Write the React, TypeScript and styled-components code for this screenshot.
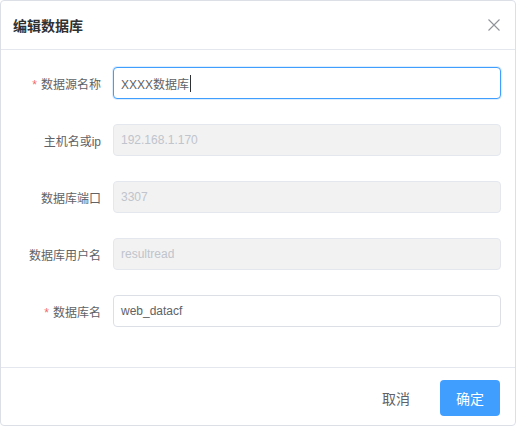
import React from "react";
import styled, { createGlobalStyle } from "styled-components";

const GlobalStyle = createGlobalStyle`
  html, body { margin: 0; padding: 0; background: #ffffff; }
  body { font-family: "Liberation Sans", "Noto Sans CJK SC", sans-serif; }
  * { box-sizing: border-box; }
`;

const Dialog = styled.div`
  width: 516px;
  height: 426px;
  border: 1px solid #dcdfe6;
  border-radius: 4px;
  background: #fff;
  display: flex;
  flex-direction: column;
  overflow: hidden;
`;

const Header = styled.div`
  height: 49px;
  flex: none;
  display: flex;
  align-items: center;
  justify-content: space-between;
  padding: 0 14px 1px 12px;
  border-bottom: 1px solid #e4e7ed;
`;

const Title = styled.div`
  font-size: 14px;
  font-weight: bold;
  color: #303133;
  letter-spacing: 0;
`;

const Close = styled.button`
  border: 0;
  background: transparent;
  padding: 0;
  width: 14px;
  height: 14px;
  display: flex;
  align-items: center;
  justify-content: center;
  cursor: pointer;
`;

const Body = styled.div`
  flex: none;
  padding: 17px 14px 40px 0;
  display: flex;
  flex-direction: column;
  gap: 25px;
`;

const Row = styled.div`
  display: flex;
  align-items: center;
  height: 32px;
`;

const Label = styled.label<{ $required?: boolean }>`
  width: 112px;
  flex: none;
  padding-right: 12px;
  text-align: right;
  font-size: 12px;
  color: #606266;
  white-space: nowrap;
  &::before {
    content: ${(p) => (p.$required ? "'*'" : "none")};
    color: #f56c6c;
    margin-right: 4px;
  }
`;

const Field = styled.div<{ $disabled?: boolean; $focused?: boolean }>`
  flex: 1;
  height: 32px;
  display: flex;
  align-items: center;
  padding: 0 7px;
  border-radius: 4px;
  font-size: 12px;
  border: 1px solid
    ${(p) => (p.$focused ? "#409eff" : p.$disabled ? "#e4e7ed" : "#dcdfe6")};
  background: ${(p) => (p.$disabled ? "#f2f2f2" : "#fff")};
  color: ${(p) => (p.$disabled ? "#c0c4cc" : "#606266")};
  box-shadow: ${(p) => (p.$focused ? "0 0 0 1px rgba(64,158,255,0.18)" : "none")};
`;

const Caret = styled.span`
  display: inline-block;
  width: 1px;
  height: 17px;
  background: #303133;
  margin-left: 1px;
`;

const Footer = styled.div`
  flex: 1;
  border-top: 1px solid #e4e7ed;
  display: flex;
  justify-content: flex-end;
  align-items: flex-start;
  padding: 12px 15px 0 0;
  gap: 14px;
`;

const Button = styled.button<{ $primary?: boolean }>`
  height: 36px;
  border: 0;
  border-radius: 4px;
  font-family: "Liberation Sans", "Noto Sans CJK SC", sans-serif;
  font-size: 14px;
  padding: 0 16px;
  cursor: pointer;
  background: ${(p) => (p.$primary ? "#409eff" : "transparent")};
  color: ${(p) => (p.$primary ? "#ffffff" : "#606266")};
  width: ${(p) => (p.$primary ? "60px" : "auto")};
`;

type FieldDef = {
  label: string;
  value: string;
  required?: boolean;
  disabled?: boolean;
  focused?: boolean;
};

const fields: FieldDef[] = [
  { label: "数据源名称", value: "XXXX数据库", required: true, focused: true },
  { label: "主机名或ip", value: "192.168.1.170", disabled: true },
  { label: "数据库端口", value: "3307", disabled: true },
  { label: "数据库用户名", value: "resultread", disabled: true },
  { label: "数据库名", value: "web_datacf", required: true },
];

export default function App() {
  return (
    <>
      <GlobalStyle />
      <Dialog>
        <Header>
          <Title>编辑数据库</Title>
          <Close aria-label="关闭">
            <svg width="12" height="12" viewBox="0 0 12 12">
              <path d="M0.5 0.5 L11.5 11.5 M11.5 0.5 L0.5 11.5" stroke="#909399" strokeWidth="1.1" fill="none" />
            </svg>
          </Close>
        </Header>
        <Body>
          {fields.map((f) => (
            <Row key={f.label}>
              <Label $required={f.required}>{f.label}</Label>
              <Field $disabled={f.disabled} $focused={f.focused}>
                {f.value}
                {f.focused && <Caret />}
              </Field>
            </Row>
          ))}
        </Body>
        <Footer>
          <Button>取消</Button>
          <Button $primary>确定</Button>
        </Footer>
      </Dialog>
    </>
  );
}
